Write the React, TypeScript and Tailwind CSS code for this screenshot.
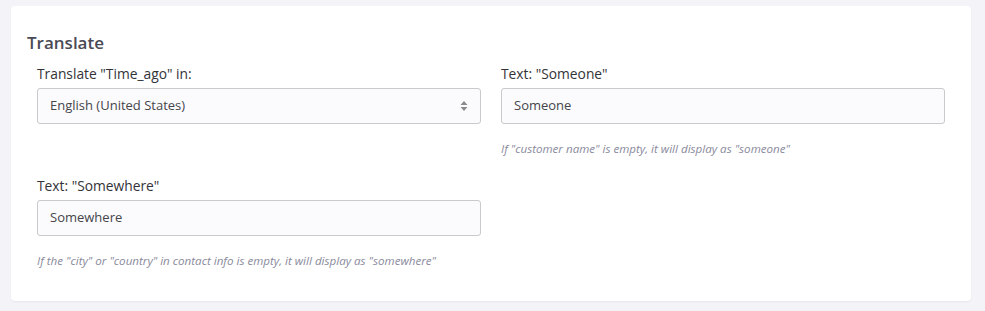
import React from "react";

const font = { fontFamily: '"Open Sans", "Noto Sans", sans-serif' };

function Arrows() {
  return (
    <svg width="8" height="12" viewBox="0 0 8 12" className="text-[#8a8a8f]">
      <path d="M4 1 L7.5 5 H0.5 Z" fill="currentColor" />
      <path d="M4 11 L7.5 7 H0.5 Z" fill="currentColor" />
    </svg>
  );
}

function Field({
  label,
  value,
  help,
  select,
}: {
  label: string;
  value: string;
  help?: string;
  select?: boolean;
}) {
  return (
    <div className="flex flex-col">
      <label className="text-[13.8px] leading-5 text-[#333338] mb-1">{label}</label>
      <div className="h-9 flex items-center justify-between px-3 border border-[#c9c9ce] rounded-[3px] bg-[#fbfbfd] text-[13px] text-[#45454a]">
        <span>{value}</span>
        {select && <Arrows />}
      </div>
      {help && (
        <p className="mt-[17px] text-[11.6px] leading-4 italic text-[#8a8a9c]">{help}</p>
      )}
    </div>
  );
}

export default function App() {
  return (
    <div className="min-h-[311px] w-[985px] bg-[#f4f4f8] pt-[6px] pl-[11px]" style={font}>
      <div className="w-[960px] h-[295px] bg-white rounded-[4px] shadow-[0_1px_2px_rgba(0,0,0,0.06)] pt-[25px]">
        <h2 className="pl-4 text-[17px] leading-6 font-semibold text-[#4a4a56]">Translate</h2>
        <div className="grid grid-cols-2 gap-x-5 gap-y-[19px] px-[26px] mt-[9px]">
          <Field label={'Translate "Time_ago" in:'} value="English (United States)" select />
          <Field
            label={'Text: "Someone"'}
            value="Someone"
            help={'If "customer name" is empty, it will display as "someone"'}
          />
          <Field
            label={'Text: "Somewhere"'}
            value="Somewhere"
            help={'If the "city" or "country" in contact info is empty, it will display as "somewhere"'}
          />
        </div>
      </div>
    </div>
  );
}
